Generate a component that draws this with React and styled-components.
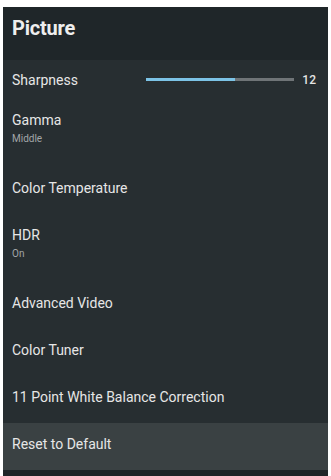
import React from "react";
import styled, { createGlobalStyle } from "styled-components";

const GlobalStyle = createGlobalStyle`
  html, body {
    margin: 0;
    background: #ffffff;
  }
  body {
    padding: 7px 3px 0 3px;
    font-family: Roboto, "Noto Sans", "Liberation Sans", sans-serif;
    -webkit-font-smoothing: antialiased;
  }
`;

const items = [
  { title: "Gamma", sub: "Middle" },
  { title: "Color Temperature" },
  { title: "HDR", sub: "On" },
  { title: "Advanced Video" },
  { title: "Color Tuner" },
  { title: "11 Point White Balance Correction" },
  { title: "Reset to Default", active: true },
];

const App = () => {
  const sharpness = 12;
  const fill = 60;

  return (
    <>
      <GlobalStyle />
      <Panel>
        <Header>
          <Title>Picture</Title>
        </Header>
        <List>
          <SliderRow>
            <Label>Sharpness</Label>
            <Track>
              <Fill style={{ width: `${fill}%` }} />
            </Track>
            <Value>{sharpness}</Value>
          </SliderRow>
          {items.map((item) => (
            <Row key={item.title} $double={!!item.sub} $active={item.active}>
              <Label>{item.title}</Label>
              {item.sub && <Sub>{item.sub}</Sub>}
            </Row>
          ))}
        </List>
        <Footer />
      </Panel>
    </>
  );
};

const Panel = styled.div`
  width: 325px;
  height: 469px;
  display: flex;
  flex-direction: column;
  background: #272e31;
  overflow: hidden;
`;
const Header = styled.div`
  height: 53px;
  background: #1f2629;
  display: flex;
  align-items: center;
  padding: 0 9px;
  box-sizing: border-box;
`;
const Title = styled.h1`
  margin: 0 0 12px 0;
  font-size: 20px;
  font-weight: 700;
  color: #eeeeee;
  letter-spacing: -0.2px;
`;
const List = styled.div`
  display: flex;
  flex-direction: column;
`;
const SliderRow = styled.div`
  height: 39px;
  display: flex;
  align-items: center;
  padding: 0 12px 0 9px;
  box-sizing: border-box;
`;
const Track = styled.div`
  margin-left: auto;
  width: 148px;
  height: 3px;
  background: #6f7477;
  display: flex;
`;
const Fill = styled.div`
  height: 100%;
  background: #7cc3e6;
`;
const Value = styled.span`
  width: 22px;
  text-align: right;
  font-size: 12px;
  font-weight: 500;
  color: #e4e4e4;
`;
const Row = styled.div`
  height: ${(p) => (p.$double ? "68px" : "47px")};
  display: flex;
  flex-direction: column;
  padding: 11px 9px 0;
  box-sizing: border-box;
  background: ${(p) => (p.$active ? "#3a4143" : "transparent")};
`;
const Label = styled.span`
  font-size: 14px;
  line-height: 20px;
  color: #e6e6e6;
`;
const Sub = styled.span`
  margin-top: 2px;
  font-size: 10px;
  line-height: 14px;
  color: #a2a6a8;
`;
const Footer = styled.div`
  flex: 1;
  background: #1f2527;
`;

export default App;
